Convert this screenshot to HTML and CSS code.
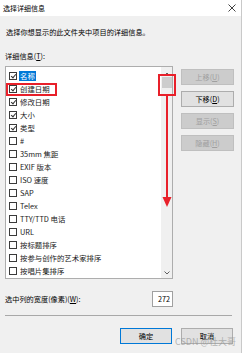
FILE: index.html
```html
<!DOCTYPE html>
<html lang="zh-CN">
<head>
  <meta charset="UTF-8" />
  <title>选择详细信息</title>
  <link rel="stylesheet" href="styles.css">
</head>
<body>
  <div class="dialog">
    <div class="titlebar">
      <span class="title">选择详细信息</span>
      <svg class="close" width="8" height="8" viewBox="0 0 8 8">
        <path d="M0.5 0.5 L7.5 7.5 M7.5 0.5 L0.5 7.5" stroke="#111" stroke-width="0.8" fill="none"/>
      </svg>
    </div>

    <p class="desc">选择你想显示的此文件夹中项目的详细信息。</p>
    <div class="label">详细信息(<u>T</u>):</div>

    <div class="main">
      <div class="listbox">
        <div class="rows">
          <div class="row"><span class="box checked"></span><span class="text selected">名称</span></div>
          <div class="row"><span class="box checked"></span><span class="text">创建日期</span></div>
          <div class="row"><span class="box checked"></span><span class="text">修改日期</span></div>
          <div class="row"><span class="box checked"></span><span class="text">大小</span></div>
          <div class="row"><span class="box checked"></span><span class="text">类型</span></div>
          <div class="row"><span class="box"></span><span class="text">#</span></div>
          <div class="row"><span class="box"></span><span class="text">35mm 焦距</span></div>
          <div class="row"><span class="box"></span><span class="text">EXIF 版本</span></div>
          <div class="row"><span class="box"></span><span class="text">ISO 速度</span></div>
          <div class="row"><span class="box"></span><span class="text">SAP</span></div>
          <div class="row"><span class="box"></span><span class="text">Telex</span></div>
          <div class="row"><span class="box"></span><span class="text">TTY/TTD 电话</span></div>
          <div class="row"><span class="box"></span><span class="text">URL</span></div>
          <div class="row"><span class="box"></span><span class="text">按标题排序</span></div>
          <div class="row"><span class="box"></span><span class="text">按参与创作的艺术家排序</span></div>
          <div class="row"><span class="box"></span><span class="text">按唱片集排序</span></div>
        </div>
        <div class="scrollbar">
          <svg width="6" height="4" viewBox="0 0 6 4"><path d="M0.5 3.5 L3 1 L5.5 3.5" stroke="#606060" stroke-width="1" fill="none"/></svg>
          <div class="thumb"></div>
          <div class="track"></div>
          <svg width="6" height="4" viewBox="0 0 6 4"><path d="M0.5 0.5 L3 3 L5.5 0.5" stroke="#606060" stroke-width="1" fill="none"/></svg>
        </div>

        <div class="mark mark-row"></div>
        <div class="mark mark-thumb"></div>
        <svg class="arrow" width="10" height="111" viewBox="0 0 10 111">
          <rect x="4" y="0" width="2" height="102" fill="#e8202a"/>
          <path d="M0.5 101 L9.5 101 L5 111 Z" fill="#e8202a"/>
        </svg>
      </div>

      <div class="side">
        <button class="btn" disabled>上移(<u>U</u>)</button>
        <button class="btn">下移(<u>D</u>)</button>
        <button class="btn" disabled>显示(<u>S</u>)</button>
        <button class="btn" disabled>隐藏(<u>H</u>)</button>
      </div>
    </div>

    <div class="width-row">
      <span>选中列的宽度(像素)(<u>W</u>):</span>
      <span class="field">272</span>
    </div>

    <div class="separator"></div>

    <div class="footer">
      <button class="btn default">确定</button>
      <button class="btn">取消</button>
    </div>

    <div class="watermark">CSDN @杜大哥</div>
  </div>
</body>
</html>
```

FILE: styles.css
```css
body {
  margin: 0;
  background: #ffffff;
  font-family: "Noto Sans CJK SC", "Noto Sans", sans-serif;
  font-size: 7.2px;
  color: #000000;
}

.dialog {
  position: relative;
  width: 241px;
  height: 353px;
  background: #f0f0f0;
  border-right: 1px solid #c9c9c9;
  overflow: hidden;
}

.titlebar {
  height: 15px;
  background: #ffffff;
  display: flex;
  align-items: center;
  justify-content: space-between;
  padding: 0 5px 1px 3px;
}

.title {
  font-size: 7px;
}

.desc {
  margin: 12px 0 0 6px;
  line-height: 9px;
}

.label {
  margin: 15px 0 0 5px;
  line-height: 9px;
}

.main {
  display: flex;
  align-items: flex-start;
  margin-top: 5px;
}

.listbox {
  position: relative;
  margin-left: 5px;
  width: 168px;
  height: 213px;
  box-sizing: border-box;
  border: 1px solid #adadad;
  background: #ffffff;
  display: flex;
}

.rows {
  flex: 1;
  padding-top: 2px;
}

.row {
  height: 13px;
  display: flex;
  align-items: center;
  padding-left: 3px;
  font-size: 7.4px;
  color: #1a1a1a;
}

.box {
  width: 8px;
  height: 8px;
  box-sizing: border-box;
  border: 1px solid #3a3a3a;
  background: #ffffff;
  position: relative;
}

.box.checked::after {
  content: '';
  position: absolute;
  left: 1.5px;
  top: 0px;
  width: 2px;
  height: 4px;
  border-right: 1px solid #333333;
  border-bottom: 1px solid #333333;
  transform: rotate(40deg);
}

.text {
  margin-left: 2px;
  padding: 0 1px;
  line-height: 10px;
}

.text.selected {
  background: #0078d7;
  color: #ffffff;
}

.scrollbar {
  width: 11px;
  background: #f0f0f0;
  display: flex;
  flex-direction: column;
  align-items: center;
  padding: 5px 0 3px;
}

.thumb {
  width: 10px;
  height: 11px;
  margin-top: 1px;
  background: #cdcdcd;
}

.track {
  flex: 1;
}

.mark {
  position: absolute;
  border: 2px solid #e8202a;
  box-sizing: border-box;
}

.mark-row {
  left: 0;
  top: 16px;
  width: 51px;
  height: 13px;
}

.mark-thumb {
  left: 152px;
  top: 7px;
  width: 18px;
  height: 22px;
}

.arrow {
  position: absolute;
  left: 156px;
  top: 29px;
}

.side {
  display: flex;
  flex-direction: column;
  gap: 6px;
  margin: 3px 0 0 8px;
}

.btn {
  width: 53px;
  height: 16px;
  padding: 0;
  box-sizing: border-box;
  border: 1px solid #adadad;
  background: #e1e1e1;
  font-family: inherit;
  font-size: 7.2px;
  color: #000000;
}

.btn:disabled {
  background: #cccccc;
  border-color: #bfbfbf;
  color: #a0a0a0;
}

.btn.default {
  border-color: #0078d7;
}

.width-row {
  margin: 12px 0 0 5px;
  width: 168px;
  height: 16px;
  display: flex;
  align-items: center;
  justify-content: space-between;
}

.field {
  width: 21px;
  height: 16px;
  box-sizing: border-box;
  border: 1px solid #a0a0a0;
  background: #ffffff;
  text-align: right;
  padding-right: 2px;
  line-height: 14px;
}

.separator {
  margin: 8px 0 0 5px;
  width: 227px;
  height: 1px;
  background: #a8a8a8;
}

.footer {
  display: flex;
  gap: 9px;
  margin: 12px 0 0 120px;
}

.footer .btn {
  width: 52px;
}

.watermark {
  position: absolute;
  left: 175px;
  top: 335px;
  font-size: 9px;
  color: rgba(150, 150, 150, 0.7);
  white-space: nowrap;
  pointer-events: none;
}
```
